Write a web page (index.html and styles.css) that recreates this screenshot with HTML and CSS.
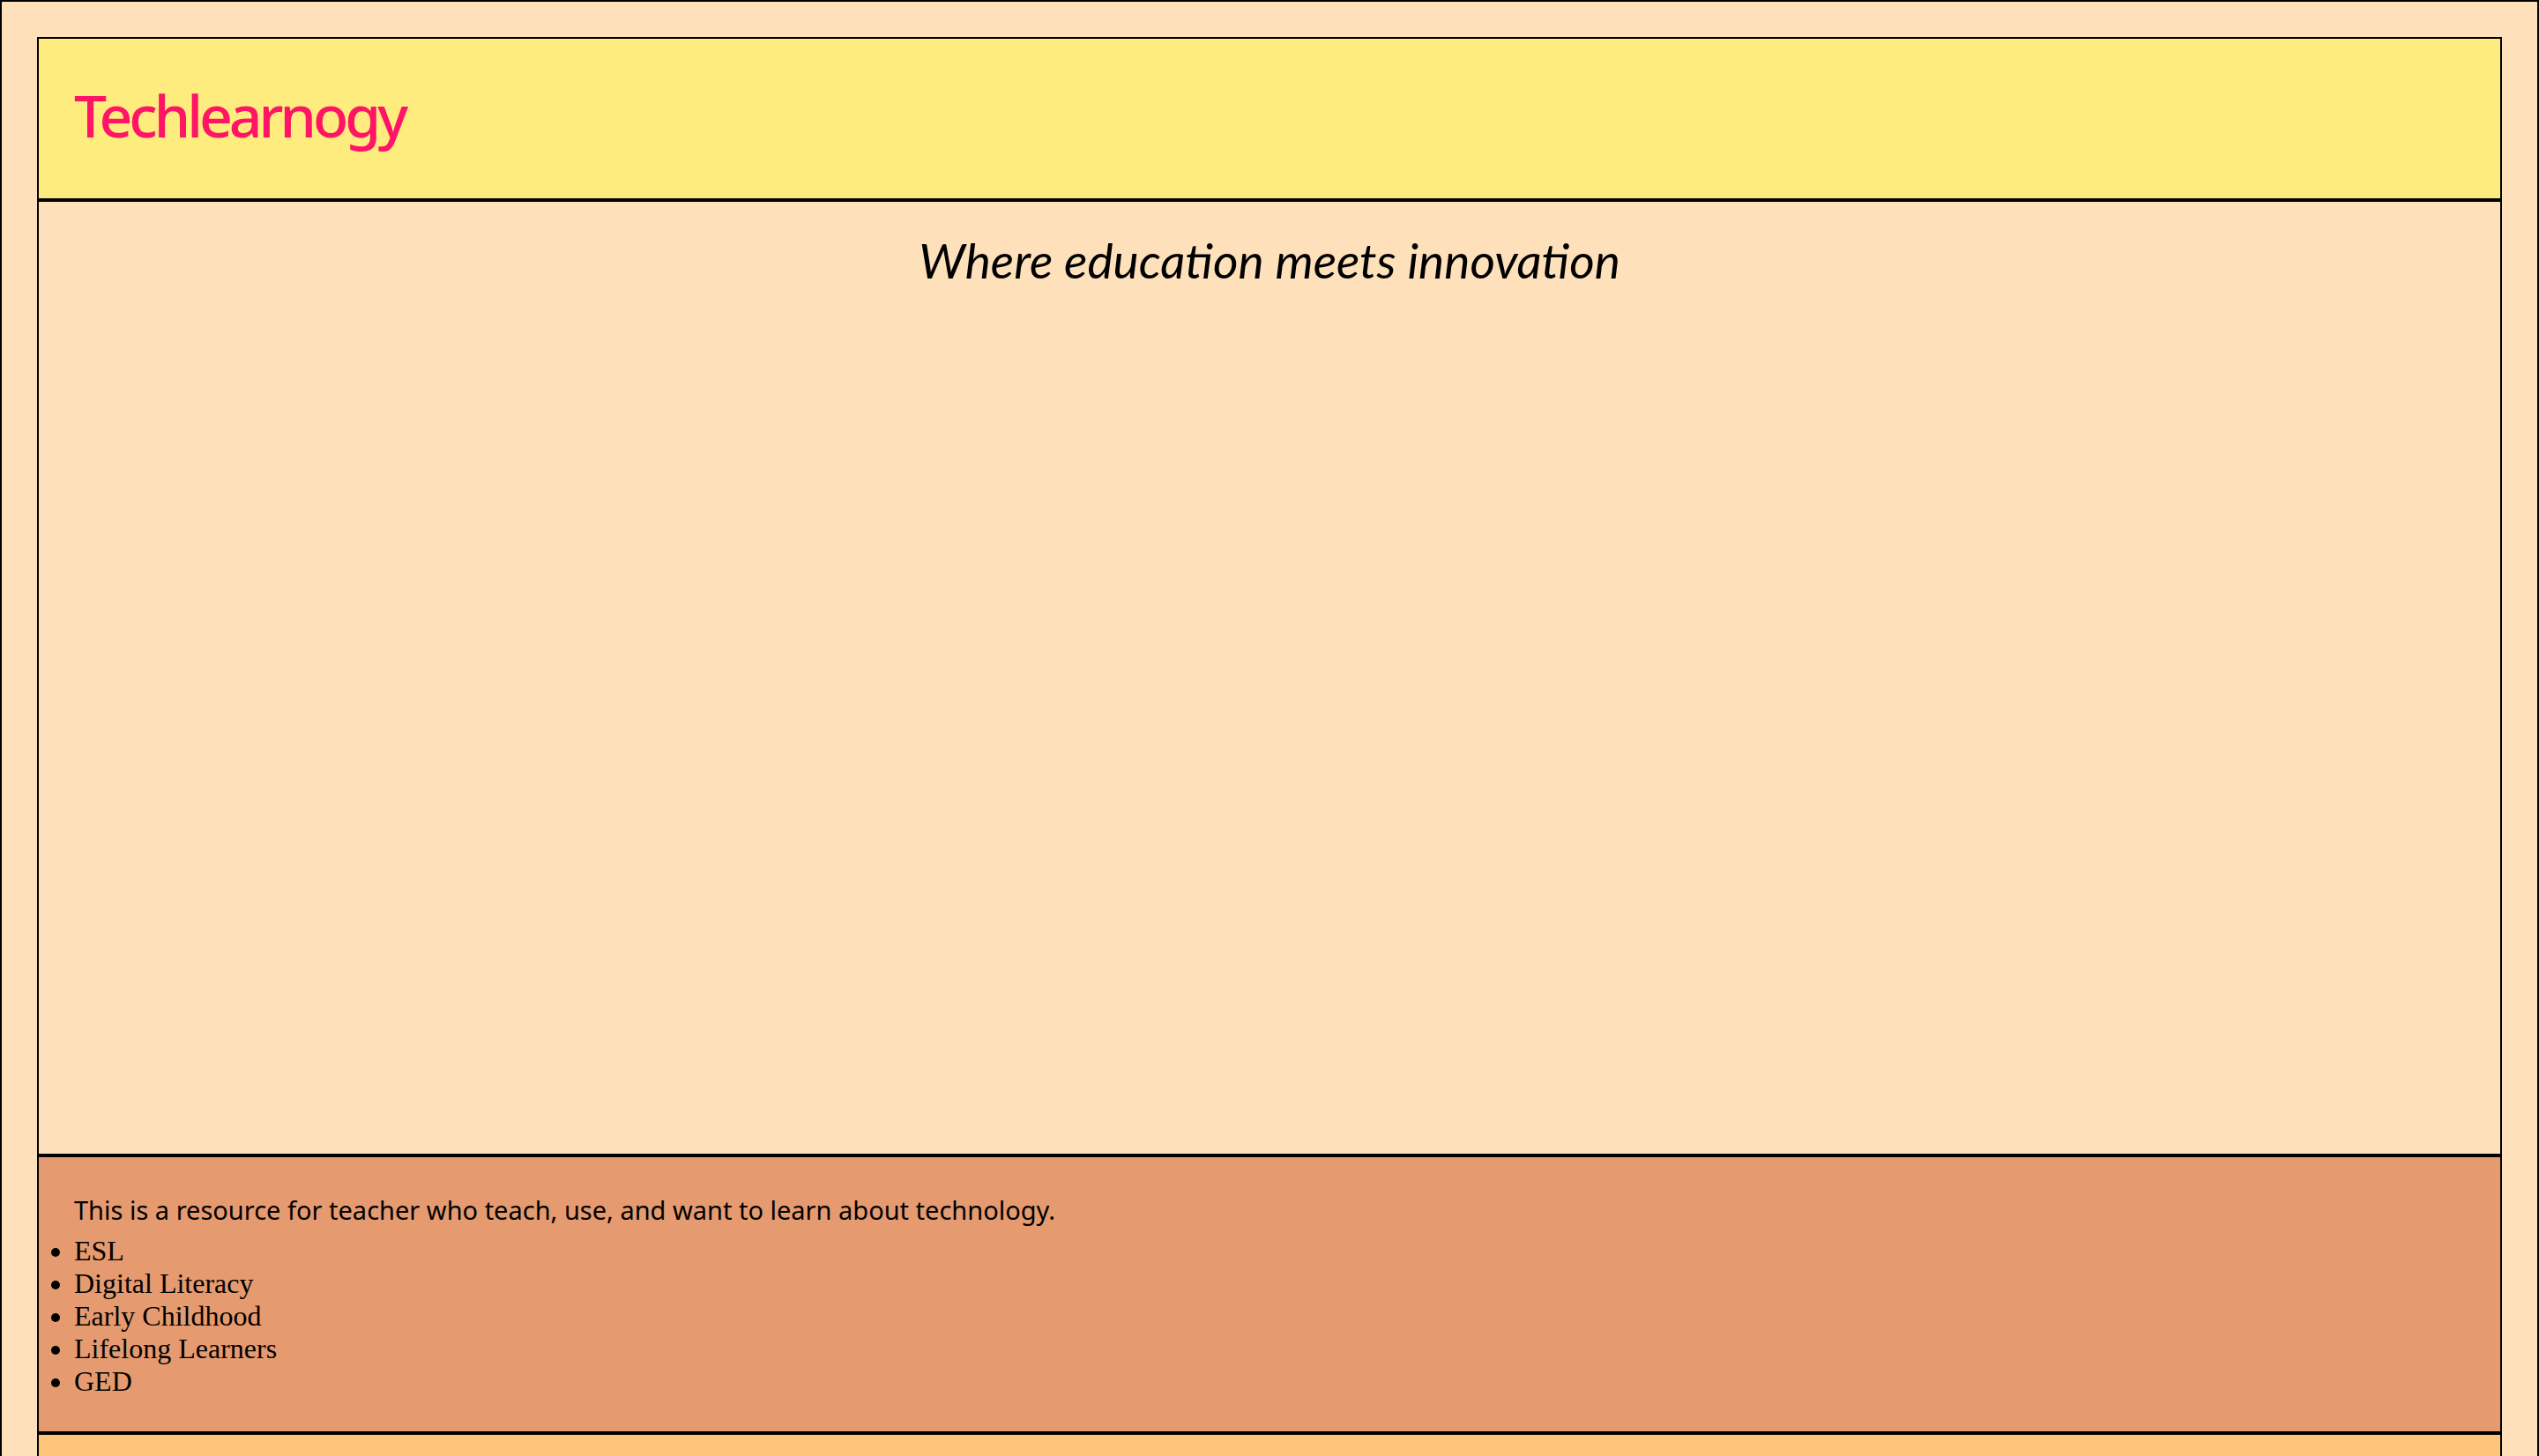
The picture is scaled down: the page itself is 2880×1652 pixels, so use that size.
FILE: index.html
```html
<!DOCTYPE html>
<html lang="en">
<head>
<meta charset="utf-8">
<title>Techlearnogy</title>
<link rel="stylesheet" href="styles.css">
</head>
<body>
  <header class="site-header">
    <h1 class="brand">Techlearnogy</h1>
  </header>
  <main class="hero">
    <h2 class="tagline">Where education meets innovation</h2>
  </main>
  <section class="about">
    <p class="about-text">This is a resource for teacher who teach, use, and want to learn about technology.</p>
    <ul class="topics">
      <li>ESL</li>
      <li>Digital Literacy</li>
      <li>Early Childhood</li>
      <li>Lifelong Learners</li>
      <li>GED</li>
    </ul>
  </section>
  <section class="more"></section>
</body>
</html>
```

FILE: styles.css
```css
html {
  background: #fee0ba;
}
body {
  margin: 0;
  border: 2px solid #000;
  padding: 40px;
  background: #fee0ba;
  font-family: "Noto Sans", "Open Sans", sans-serif;
}
.site-header,
.hero,
.about,
.more {
  border: 2px solid #000;
}
.site-header {
  background: #ffec7f;
  height: 181px;
  box-sizing: content-box;
  padding: 0 40px;
}
.brand {
  margin: 0;
  padding-top: 44px;
  font-family: "Noto Sans", sans-serif;
  font-weight: 500;
  font-size: 66px;
  line-height: 84px;
  letter-spacing: -4px;
  color: #ff1466;
}
.hero {
  height: 1080px;
  box-sizing: content-box;
}
.tagline {
  margin: 34px 0 0;
  text-align: center;
  font-family: Lato, "Noto Sans", sans-serif;
  font-style: italic;
  font-weight: 400;
  font-size: 55px;
  line-height: 64px;
  color: #000;
}
.about {
  background: #e69a70;
  padding: 40px 0 38px;
}
.about-text {
  margin: 0 0 8px 40px;
  font-family: "Noto Sans", sans-serif;
  font-size: 29px;
  line-height: 40px;
  color: #000;
}
.topics {
  margin: 0;
  padding-left: 40px;
  font-family: "Liberation Serif", "Times New Roman", serif;
  font-size: 32px;
  line-height: normal;
}
.more {
  background: #ffc57b;
  height: 300px;
}
```
